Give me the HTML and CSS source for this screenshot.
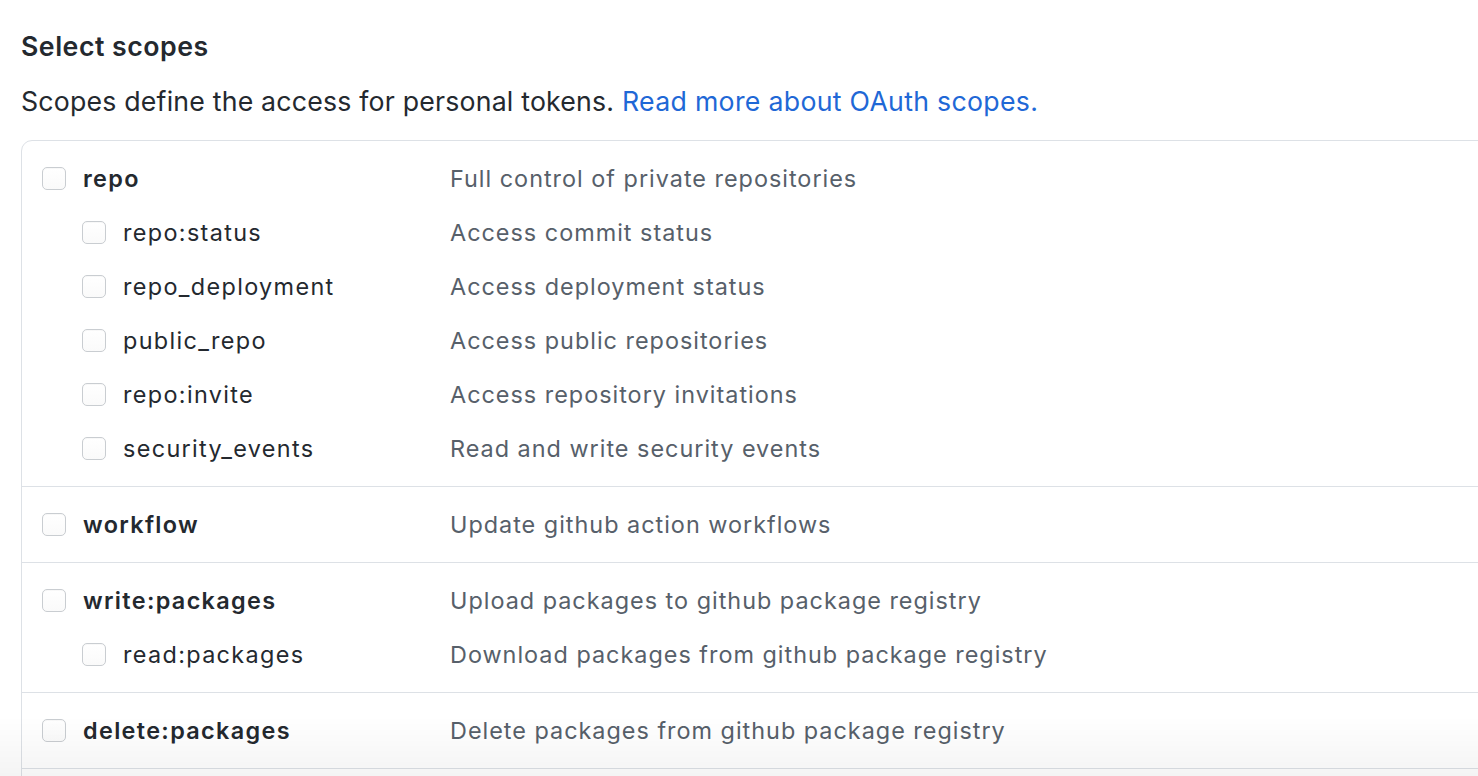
FILE: index.html
```html
<!DOCTYPE html>
<html lang="en">
<head>
<meta charset="utf-8">
<title>Select scopes</title>
<link rel="stylesheet" href="styles.css">
</head>
<body>
<div class="page">
  <h3 class="title">Select scopes</h3>
  <p class="intro">Scopes define the access for personal tokens. <a class="link" href="#">Read more about OAuth scopes.</a></p>
  <div class="box">
    <div class="group">
      <div class="row"><div class="label top"><span class="cb"></span><span class="name">repo</span></div><div class="desc">Full control of private repositories</div></div>
      <div class="row"><div class="label sub"><span class="cb"></span><span class="name">repo:status</span></div><div class="desc">Access commit status</div></div>
      <div class="row"><div class="label sub"><span class="cb"></span><span class="name">repo_deployment</span></div><div class="desc">Access deployment status</div></div>
      <div class="row"><div class="label sub"><span class="cb"></span><span class="name">public_repo</span></div><div class="desc">Access public repositories</div></div>
      <div class="row"><div class="label sub"><span class="cb"></span><span class="name">repo:invite</span></div><div class="desc">Access repository invitations</div></div>
      <div class="row"><div class="label sub"><span class="cb"></span><span class="name">security_events</span></div><div class="desc">Read and write security events</div></div>
    </div>
    <div class="group">
      <div class="row"><div class="label top"><span class="cb"></span><span class="name">workflow</span></div><div class="desc">Update github action workflows</div></div>
    </div>
    <div class="group">
      <div class="row"><div class="label top"><span class="cb"></span><span class="name">write:packages</span></div><div class="desc">Upload packages to github package registry</div></div>
      <div class="row"><div class="label sub"><span class="cb"></span><span class="name">read:packages</span></div><div class="desc">Download packages from github package registry</div></div>
    </div>
    <div class="group">
      <div class="row"><div class="label top"><span class="cb"></span><span class="name">delete:packages</span></div><div class="desc">Delete packages from github package registry</div></div>
    </div>
    <div class="group group-next"></div>
  </div>
</div>
<div class="fade"></div>
</body>
</html>
```
FILE: styles.css
```css
html, body {
  margin: 0;
  padding: 0;
  background: #ffffff;
  overflow: hidden;
  height: 776px;
}
body {
  font-family: Inter, "Liberation Sans", Arial, sans-serif;
  color: #24292f;
  font-size: 23.4px;
}
.page {
  padding: 31px 0 0 21px;
}
.title {
  margin: 0;
  font-size: 26.7px;
  font-weight: 600;
  line-height: 30px;
  letter-spacing: 0.5px;
  color: #24292f;
}
.intro {
  margin: 25px 0 0;
  font-size: 26.7px;
  line-height: 30px;
  letter-spacing: 0.2px;
  color: #24292f;
}
.link {
  color: #1f68d6;
  text-decoration: none;
  letter-spacing: 0.3px;
}
.box {
  margin-top: 24px;
  width: 1500px;
  border: 1px solid #dde1e6;
  border-radius: 11px;
  background: #fff;
}
.group {
  padding: 10.5px 0;
  border-top: 1px solid #dde1e6;
}
.group:first-child {
  border-top: 0;
}
.group-next {
  height: 54px;
}
.row {
  display: flex;
  align-items: center;
  height: 54px;
  letter-spacing: 1px;
}
.label {
  box-sizing: border-box;
  width: 428px;
  display: flex;
  align-items: center;
  gap: 17px;
  padding-left: 20px;
  letter-spacing: 1.35px;
}
.label.sub {
  padding-left: 60px;
}
.top .name {
  font-weight: 600;
  letter-spacing: 1.35px;
}
.cb {
  box-sizing: border-box;
  width: 24px;
  height: 23px;
  border: 1px solid #c9cdd1;
  border-radius: 5px;
  background: linear-gradient(#ffffff, #fafafa);
  box-shadow: inset 0 1px 1px rgba(0,0,0,0.03);
  flex: none;
}
.name {
  color: #24292f;
}
.desc {
  color: #57606a;
}
.fade {
  position: fixed;
  left: 0;
  right: 0;
  bottom: 0;
  height: 60px;
  background: linear-gradient(to bottom, rgba(0,0,0,0), rgba(0,0,0,0.045));
  pointer-events: none;
}
```
